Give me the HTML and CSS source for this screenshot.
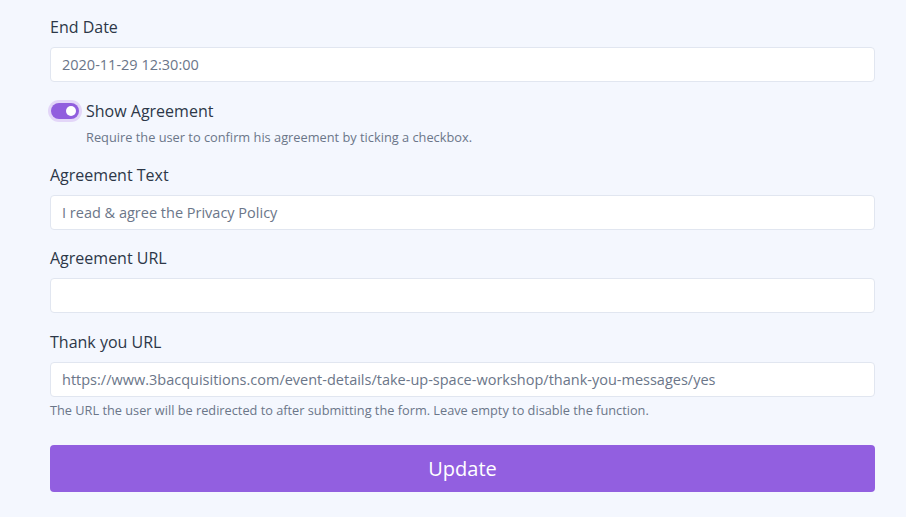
FILE: index.html
```html
<!DOCTYPE html>
<html>
<head>
<meta charset="utf-8">
<link rel="stylesheet" href="styles.css">
</head>
<body>
<form class="form">
  <div class="field">
    <label class="label">End Date</label>
    <div class="input">2020-11-29 12:30:00</div>
  </div>
  <div class="toggle-field">
    <div class="toggle-row">
      <span class="toggle"><span class="knob"></span></span>
      <span class="toggle-label">Show Agreement</span>
    </div>
    <div class="toggle-help">Require the user to confirm his agreement by ticking a checkbox.</div>
  </div>
  <div class="field">
    <label class="label">Agreement Text</label>
    <div class="input">I read &amp; agree the Privacy Policy</div>
  </div>
  <div class="field field-loose">
    <label class="label">Agreement URL</label>
    <div class="input"></div>
  </div>
  <div class="field">
    <label class="label">Thank you URL</label>
    <div class="input">https://www.3bacquisitions.com/event-details/take-up-space-workshop/thank-you-messages/yes</div>
    <div class="help">The URL the user will be redirected to after submitting the form. Leave empty to disable the function.</div>
  </div>
  <div class="button">Update</div>
</form>
</body>
</html>
```
FILE: styles.css
```css
html, body {
  margin: 0;
  padding: 0;
  background: #f4f7fe;
}
body {
  font-family: "Open Sans", "Noto Sans", sans-serif;
  color: #2d3748;
}
.form {
  width: 825px;
  padding: 16px 0 0 50px;
  display: flex;
  flex-direction: column;
}
.field {
  display: flex;
  flex-direction: column;
  margin-bottom: 17px;
}
.field-loose {
  margin-bottom: 18px;
}
.label {
  font-size: 16px;
  line-height: 22px;
  color: #2d3748;
  margin-bottom: 9px;
}
.input {
  box-sizing: border-box;
  height: 35px;
  background: #fff;
  border: 1px solid #e1e6f0;
  border-radius: 4px;
  padding: 0 11px;
  font-size: 14.5px;
  line-height: 33px;
  color: #6b7689;
  white-space: nowrap;
  overflow: hidden;
}
.help {
  font-size: 12.75px;
  color: #6b7689;
  margin-top: 5px;
  line-height: 17px;
}
.toggle-field {
  margin-top: 1px;
  margin-bottom: 18px;
}
.toggle-row {
  display: flex;
  align-items: center;
  gap: 7px;
}
.toggle {
  box-sizing: border-box;
  width: 28px;
  height: 16px;
  border-radius: 8px;
  background: #915ede;
  box-shadow: 0 0 0 3px #e3d6f8;
  position: relative;
  margin-left: 1px;
}
.knob {
  position: absolute;
  top: 3px;
  right: 3px;
  width: 10px;
  height: 10px;
  border-radius: 50%;
  background: #fff;
}
.toggle-label {
  font-size: 16px;
  line-height: 22px;
  color: #2d3748;
}
.toggle-help {
  font-size: 12.8px;
  line-height: 17px;
  color: #6b7689;
  padding-left: 36px;
  margin-top: 7px;
}
.button {
  height: 47px;
  margin-top: 9px;
  background: #925fe0;
  border-radius: 4px;
  color: #fff;
  font-size: 20px;
  display: flex;
  align-items: center;
  justify-content: center;
}
```
